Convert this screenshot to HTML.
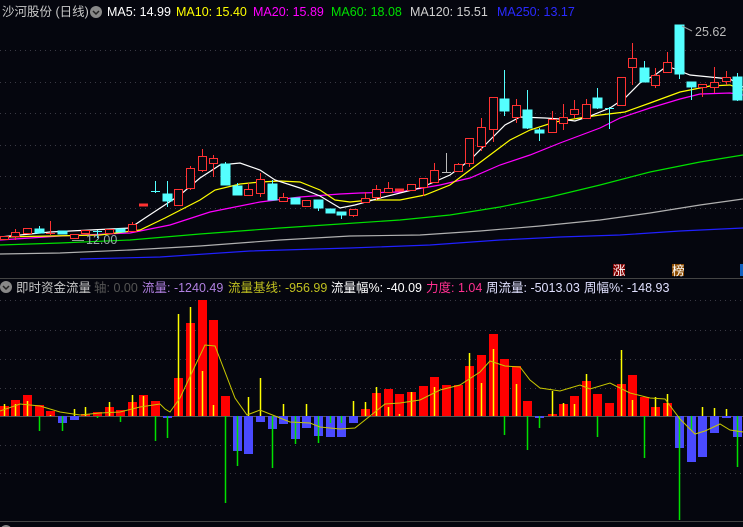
<!DOCTYPE html>
<html><head><meta charset="utf-8"><style>
html,body{margin:0;padding:0;background:#05060e;width:743px;height:527px;overflow:hidden}
svg{display:block}
text{font-family:"Liberation Sans","Noto Sans CJK SC",sans-serif;font-size:12.5px}
</style></head><body>
<svg width="743" height="527" viewBox="0 0 743 527" xmlns="http://www.w3.org/2000/svg">
<rect width="743" height="527" fill="#05060e"/>
<g stroke="#3a3a44" stroke-width="1" stroke-dasharray="1,4">
<line x1="0" y1="50.5" x2="743" y2="50.5"/><line x1="0" y1="82.5" x2="743" y2="82.5"/><line x1="0" y1="113.5" x2="743" y2="113.5"/><line x1="0" y1="145.5" x2="743" y2="145.5"/><line x1="0" y1="176.5" x2="743" y2="176.5"/><line x1="0" y1="208.5" x2="743" y2="208.5"/>
<line x1="0" y1="300.5" x2="743" y2="300.5"/><line x1="0" y1="330.5" x2="743" y2="330.5"/><line x1="0" y1="359.5" x2="743" y2="359.5"/><line x1="0" y1="388.5" x2="743" y2="388.5"/><line x1="0" y1="445.5" x2="743" y2="445.5"/><line x1="0" y1="473.5" x2="743" y2="473.5"/>
</g>
<line x1="0" y1="278.5" x2="743" y2="278.5" stroke="#444" />
<line x1="0" y1="521.5" x2="743" y2="521.5" stroke="#444" />
<g fill="none" stroke-width="1.2">
<polyline stroke="#2020ff" points="80,259 160,257 250,251 350,248 430,245 500,240 560,237 620,235 680,231 743,228"/>
<polyline stroke="#b0b0b0" points="0,254 60,253 130,250 200,246 280,240 350,236 420,235 480,231 540,226 600,220 650,213 700,205 743,199"/>
<polyline stroke="#00e000" points="0,245 60,243 130,240 200,234 280,228 340,224 400,220 450,215 500,207 550,197 600,185 650,172 700,162 743,155"/>
<polyline stroke="#ff00ff" points="0,240 60,236 130,233 170,225 210,212 260,202 300,197 340,194 360,193 400,192 440,185 470,178 500,165 530,155 560,143 600,128 620,118 650,108 680,99 700,94 730,93 743,95"/>
<polyline stroke="#ffff00" points="0,237 100,235 140,230 165,218 200,200 215,190 240,184 260,182 280,181 300,182 320,190 335,200 350,202 370,200 400,200 425,195 450,185 470,170 490,155 510,140 530,130 555,122 580,118 600,115 625,112 650,103 680,92 710,86 730,85 743,90"/>
<polyline stroke="#ffffff" points="0,237 50,232 130,228 145,218 180,195 200,178 220,165 240,163 260,170 275,180 300,188 320,196 340,208 355,205 380,198 420,188 450,175 470,160 490,140 505,125 520,117 545,118 560,119 575,121 590,116 610,108 625,98 640,83 655,75 667,66 680,71 690,75 710,77 730,79 743,87"/>
</g>
<g stroke="#ff3232" fill="#05060e" stroke-width="1">
<rect x="0.5" y="236.5" width="8" height="3"/>
<line x1="15.5" y1="229" x2="15.5" y2="240"/><rect x="11.5" y="232.5" width="8" height="4"/>
<rect x="23.5" y="228.5" width="8" height="5"/>
<line x1="50.5" y1="221" x2="50.5" y2="235"/><line x1="46" y1="233.5" x2="55" y2="233.5"/>
<rect x="70.5" y="234.5" width="8" height="4"/>
<rect x="81.5" y="230.5" width="8" height="3"/>
<rect x="105.5" y="229.5" width="8" height="4"/>
<line x1="132.5" y1="222" x2="132.5" y2="231"/><rect x="128.5" y="224.5" width="8" height="7"/>
<rect x="139.5" y="204" width="8" height="2" fill="#ff3232"/>
<rect x="174.5" y="189.5" width="8" height="16"/>
<line x1="190.5" y1="166" x2="190.5" y2="190"/><rect x="186.5" y="168.5" width="8" height="20"/>
<line x1="202.5" y1="149" x2="202.5" y2="172"/><rect x="198.5" y="156.5" width="8" height="14"/>
<line x1="213.5" y1="155" x2="213.5" y2="177"/><rect x="209.5" y="158.5" width="8" height="5"/>
<line x1="248.5" y1="183" x2="248.5" y2="196"/><rect x="244.5" y="189.5" width="8" height="6"/>
<line x1="260.5" y1="173" x2="260.5" y2="197"/><rect x="256.5" y="179.5" width="8" height="14"/>
<line x1="283.5" y1="193" x2="283.5" y2="202"/><rect x="279.5" y="197.5" width="8" height="4"/>
<rect x="302.5" y="200.5" width="8" height="6"/>
<line x1="353.5" y1="209" x2="353.5" y2="217"/><rect x="349.5" y="209.5" width="8" height="6"/>
<line x1="365.5" y1="192" x2="365.5" y2="202"/><rect x="361.5" y="198.5" width="8" height="4"/>
<line x1="376.5" y1="185" x2="376.5" y2="200"/><rect x="372.5" y="189.5" width="8" height="8"/>
<line x1="388.5" y1="182" x2="388.5" y2="192"/><rect x="384.5" y="188.5" width="8" height="4"/>
<rect x="395.5" y="189" width="8" height="2" fill="#ff3232"/>
<rect x="407.5" y="184.5" width="8" height="6"/>
<line x1="423.5" y1="178" x2="423.5" y2="196"/><rect x="419.5" y="178.5" width="8" height="9"/>
<line x1="434.5" y1="163" x2="434.5" y2="182"/><rect x="430.5" y="170.5" width="8" height="12"/>
<line x1="458.5" y1="163" x2="458.5" y2="171"/><rect x="454.5" y="164.5" width="8" height="7"/>
<line x1="469.5" y1="138" x2="469.5" y2="167"/><rect x="465.5" y="138.5" width="8" height="25"/>
<line x1="481.5" y1="118" x2="481.5" y2="151"/><rect x="477.5" y="127.5" width="8" height="19"/>
<line x1="493.5" y1="97" x2="493.5" y2="142"/><rect x="489.5" y="97.5" width="8" height="32"/>
<line x1="516.5" y1="99" x2="516.5" y2="123"/><rect x="512.5" y="105.5" width="8" height="12"/>
<line x1="552.5" y1="111" x2="552.5" y2="133"/><rect x="548.5" y="119.5" width="8" height="13"/>
<line x1="563.5" y1="104" x2="563.5" y2="130"/><rect x="559.5" y="117.5" width="8" height="6"/>
<line x1="574.5" y1="100" x2="574.5" y2="118"/><rect x="570.5" y="109.5" width="8" height="5"/>
<line x1="586.5" y1="99" x2="586.5" y2="118"/><rect x="582.5" y="104.5" width="8" height="14"/>
<rect x="617.5" y="77.5" width="8" height="28"/>
<line x1="632.5" y1="43" x2="632.5" y2="85"/><rect x="628.5" y="58.5" width="8" height="9"/>
<line x1="655.5" y1="68" x2="655.5" y2="88"/><rect x="651.5" y="75.5" width="8" height="10"/>
<line x1="667.5" y1="52" x2="667.5" y2="72"/><rect x="663.5" y="62.5" width="8" height="10"/>
<line x1="702.5" y1="84" x2="702.5" y2="97"/><rect x="698.5" y="84.5" width="8" height="3"/>
<line x1="714.5" y1="67" x2="714.5" y2="93"/><rect x="710.5" y="82.5" width="8" height="5"/>
<line x1="726.5" y1="71" x2="726.5" y2="85"/><rect x="722.5" y="77.5" width="8" height="4"/>
</g>
<g stroke="#54ffff" fill="#54ffff" stroke-width="1">
<line x1="39.5" y1="226" x2="39.5" y2="233"/><rect x="35" y="229" width="9" height="4"/>
<rect x="58" y="231" width="9" height="3"/>
<line x1="97.5" y1="230" x2="97.5" y2="238"/><line x1="93" y1="231.5" x2="102" y2="231.5"/>
<rect x="116" y="229" width="9" height="3"/>
<line x1="155.5" y1="181" x2="155.5" y2="193"/><line x1="151" y1="191.5" x2="160" y2="191.5"/>
<line x1="167.5" y1="181" x2="167.5" y2="207"/><rect x="163" y="194" width="9" height="7"/>
<line x1="225.5" y1="162" x2="225.5" y2="185"/><rect x="221" y="164" width="9" height="21"/>
<line x1="237.5" y1="183" x2="237.5" y2="195"/><rect x="233" y="186" width="9" height="9"/>
<line x1="272.5" y1="180" x2="272.5" y2="200"/><rect x="268" y="184" width="9" height="16"/>
<rect x="291" y="198" width="9" height="6"/>
<line x1="318.5" y1="200" x2="318.5" y2="211"/><rect x="314" y="200" width="9" height="8"/>
<rect x="326" y="209" width="9" height="4"/>
<line x1="341.5" y1="212" x2="341.5" y2="219"/><rect x="337" y="212" width="9" height="3"/>
<line x1="504.5" y1="70" x2="504.5" y2="116"/><rect x="500" y="99" width="9" height="12"/>
<line x1="527.5" y1="90" x2="527.5" y2="129"/><rect x="523" y="110" width="9" height="18"/>
<line x1="539.5" y1="128" x2="539.5" y2="141"/><rect x="535" y="130" width="9" height="3"/>
<line x1="597.5" y1="88" x2="597.5" y2="109"/><rect x="593" y="98" width="9" height="10"/>
<line x1="609.5" y1="107" x2="609.5" y2="129"/><line x1="605" y1="108.5" x2="614" y2="108.5"/>
<line x1="644.5" y1="61" x2="644.5" y2="82"/><rect x="640" y="68" width="9" height="14"/>
<line x1="679.5" y1="25" x2="679.5" y2="79"/><rect x="675" y="25" width="9" height="49"/>
<line x1="691.5" y1="82" x2="691.5" y2="100"/><rect x="687" y="82" width="9" height="5"/>
<line x1="737.5" y1="73" x2="737.5" y2="101"/><rect x="733" y="77" width="9" height="23"/>
</g>
<g stroke="#bbbbbb"><line x1="446.5" y1="153" x2="446.5" y2="173"/><line x1="442" y1="172.5" x2="451" y2="172.5"/></g>
<text x="86" y="244" fill="#9aa" font-size="12">12.00</text>
<line x1="72" y1="240.5" x2="84" y2="240.5" stroke="#999"/>
<text x="695" y="36" fill="#bbb" font-size="12">25.62</text>
<line x1="682" y1="26" x2="692" y2="31" stroke="#999"/>
<rect x="613" y="264" width="12" height="12" fill="#800000"/><text x="613" y="275" fill="#fff" font-size="11">涨</text>
<rect x="672" y="264" width="12" height="12" fill="#8a4a00"/><text x="672" y="275" fill="#fff" font-size="11">榜</text>
<rect x="740" y="264" width="3" height="12" fill="#1060c0"/>
<text x="2" y="16" fill="#c8c8c8" font-size="13.5">沙河股份 (日线)</text>
<circle cx="96" cy="12" r="6" fill="#888"/><path d="M93 11 L96 14 L99 11" stroke="#222" stroke-width="1.5" fill="none"/>
<text x="107" y="16" fill="#ffffff">MA5: 14.99</text>
<text x="176" y="16" fill="#ffff00">MA10: 15.40</text>
<text x="253" y="16" fill="#ff00ff">MA20: 15.89</text>
<text x="331" y="16" fill="#00e000">MA60: 18.08</text>
<text x="410" y="16" fill="#d0d0d0">MA120: 15.51</text>
<text x="497" y="16" fill="#2a2aff">MA250: 13.17</text>
<circle cx="6" cy="287" r="6" fill="#888"/><path d="M3 286 L6 289 L9 286" stroke="#222" stroke-width="1.5" fill="none"/>
<text x="16" y="292" fill="#c8c8c8">即时资金流量</text>
<text x="94" y="292" fill="#555">轴: 0.00</text>
<text x="142" y="292" fill="#b080e0">流量: -1240.49</text>
<text x="228" y="292" fill="#c0c020">流量基线: -956.99</text>
<text x="331" y="292" fill="#ffffff">流量幅%: -40.09</text>
<text x="426" y="292" fill="#ff3090">力度: 1.04</text>
<text x="486" y="292" fill="#e0e0ff">周流量: -5013.03</text>
<text x="584" y="292" fill="#e0e0ff">周幅%: -148.93</text>
<line x1="0" y1="416.5" x2="743" y2="416.5" stroke="#555"/>
<g fill="#ff0000">
<rect x="0" y="406" width="9" height="10"/><rect x="11" y="400" width="9" height="16"/><rect x="23" y="395" width="9" height="21"/><rect x="35" y="405" width="9" height="11"/><rect x="46" y="411" width="9" height="5"/>
<rect x="81" y="414" width="9" height="2"/><rect x="93" y="412" width="9" height="4"/><rect x="105" y="407" width="9" height="9"/><rect x="116" y="410" width="9" height="6"/><rect x="128" y="402" width="9" height="14"/><rect x="139" y="395" width="9" height="21"/><rect x="151" y="401" width="9" height="15"/>
<rect x="174" y="378" width="9" height="38"/><rect x="186" y="323" width="9" height="93"/><rect x="198" y="300" width="9" height="116"/><rect x="209" y="320" width="9" height="96"/><rect x="221" y="396" width="9" height="20"/>
<rect x="361" y="409" width="9" height="7"/><rect x="372" y="393" width="9" height="23"/><rect x="384" y="389" width="9" height="27"/><rect x="395" y="394" width="9" height="22"/><rect x="407" y="392" width="9" height="24"/><rect x="419" y="386" width="9" height="30"/><rect x="430" y="377" width="9" height="39"/><rect x="442" y="385" width="9" height="31"/><rect x="454" y="385" width="9" height="31"/><rect x="465" y="366" width="9" height="50"/><rect x="477" y="355" width="9" height="61"/><rect x="489" y="334" width="9" height="82"/><rect x="500" y="359" width="9" height="57"/><rect x="512" y="366" width="9" height="50"/><rect x="523" y="401" width="9" height="15"/>
<rect x="548" y="414" width="9" height="2"/><rect x="559" y="404" width="9" height="12"/><rect x="570" y="396" width="9" height="20"/><rect x="582" y="381" width="9" height="35"/><rect x="593" y="394" width="9" height="22"/><rect x="605" y="403" width="9" height="13"/><rect x="617" y="384" width="9" height="32"/><rect x="628" y="375" width="9" height="41"/><rect x="640" y="397" width="9" height="19"/><rect x="651" y="407" width="9" height="9"/><rect x="663" y="403" width="9" height="13"/>
</g>
<g fill="#4a4aff">
<rect x="58" y="416" width="9" height="7"/><rect x="70" y="416" width="9" height="4"/><rect x="163" y="416" width="9" height="2"/>
<rect x="233" y="416" width="9" height="35"/><rect x="244" y="416" width="9" height="38"/><rect x="256" y="416" width="9" height="6"/><rect x="268" y="416" width="9" height="13"/><rect x="279" y="416" width="9" height="8"/><rect x="291" y="416" width="9" height="23"/><rect x="302" y="416" width="9" height="12"/><rect x="314" y="416" width="9" height="20"/><rect x="326" y="416" width="9" height="21"/><rect x="337" y="416" width="9" height="21"/><rect x="349" y="416" width="9" height="7"/>
<rect x="535" y="416" width="9" height="2"/>
<rect x="675" y="416" width="9" height="32"/><rect x="687" y="416" width="9" height="46"/><rect x="698" y="416" width="9" height="41"/><rect x="710" y="416" width="9" height="17"/><rect x="722" y="416" width="9" height="2"/><rect x="733" y="416" width="9" height="21"/>
</g>
<g stroke="#ffff00" stroke-width="1.5">
<line x1="4.5" y1="404" x2="4.5" y2="416"/><line x1="15.5" y1="404" x2="15.5" y2="416"/><line x1="27.5" y1="401" x2="27.5" y2="416"/><line x1="50.5" y1="415" x2="50.5" y2="416"/><line x1="74.5" y1="409" x2="74.5" y2="416"/><line x1="85.5" y1="407" x2="85.5" y2="416"/><line x1="109.5" y1="402" x2="109.5" y2="416"/><line x1="132.5" y1="395" x2="132.5" y2="416"/><line x1="143.5" y1="396" x2="143.5" y2="416"/>
<line x1="178.5" y1="314" x2="178.5" y2="416"/><line x1="190.5" y1="307" x2="190.5" y2="416"/><line x1="202.5" y1="371" x2="202.5" y2="416"/><line x1="213.5" y1="405" x2="213.5" y2="416"/><line x1="248.5" y1="397" x2="248.5" y2="416"/><line x1="260.5" y1="378" x2="260.5" y2="416"/><line x1="283.5" y1="404" x2="283.5" y2="416"/><line x1="306.5" y1="404" x2="306.5" y2="416"/><line x1="353.5" y1="401" x2="353.5" y2="416"/><line x1="365.5" y1="402" x2="365.5" y2="416"/>
<line x1="376.5" y1="387" x2="376.5" y2="416"/><line x1="388.5" y1="407" x2="388.5" y2="416"/><line x1="399.5" y1="414" x2="399.5" y2="416"/><line x1="411.5" y1="392" x2="411.5" y2="416"/><line x1="434.5" y1="387" x2="434.5" y2="416"/><line x1="469.5" y1="353" x2="469.5" y2="416"/><line x1="481.5" y1="383" x2="481.5" y2="416"/><line x1="493.5" y1="349" x2="493.5" y2="416"/><line x1="516.5" y1="384" x2="516.5" y2="416"/><line x1="552.5" y1="391" x2="552.5" y2="416"/><line x1="563.5" y1="403" x2="563.5" y2="416"/><line x1="574.5" y1="404" x2="574.5" y2="416"/><line x1="586.5" y1="374" x2="586.5" y2="416"/><line x1="621.5" y1="350" x2="621.5" y2="416"/><line x1="632.5" y1="400" x2="632.5" y2="416"/><line x1="655.5" y1="397" x2="655.5" y2="416"/><line x1="667.5" y1="394" x2="667.5" y2="416"/><line x1="702.5" y1="407" x2="702.5" y2="416"/><line x1="714.5" y1="408" x2="714.5" y2="416"/><line x1="726.5" y1="409" x2="726.5" y2="416"/>
</g>
<g stroke="#00e000" stroke-width="1.5">
<line x1="39.5" y1="416" x2="39.5" y2="431"/><line x1="62.5" y1="416" x2="62.5" y2="431"/><line x1="97.5" y1="416" x2="97.5" y2="418"/><line x1="120.5" y1="416" x2="120.5" y2="422"/><line x1="155.5" y1="416" x2="155.5" y2="441"/><line x1="167.5" y1="416" x2="167.5" y2="438"/>
<line x1="225.5" y1="416" x2="225.5" y2="503"/><line x1="237.5" y1="416" x2="237.5" y2="466"/><line x1="272.5" y1="416" x2="272.5" y2="468"/><line x1="295.5" y1="416" x2="295.5" y2="444"/><line x1="318.5" y1="416" x2="318.5" y2="443"/><line x1="330.5" y1="416" x2="330.5" y2="423"/><line x1="341.5" y1="416" x2="341.5" y2="423"/>
<line x1="504.5" y1="416" x2="504.5" y2="435"/><line x1="527.5" y1="416" x2="527.5" y2="450"/><line x1="539.5" y1="416" x2="539.5" y2="428"/><line x1="597.5" y1="416" x2="597.5" y2="437"/><line x1="644.5" y1="416" x2="644.5" y2="458"/><line x1="679.5" y1="416" x2="679.5" y2="520"/><line x1="691.5" y1="416" x2="691.5" y2="430"/><line x1="737.5" y1="416" x2="737.5" y2="467"/>
</g>
<polyline fill="none" stroke="#c8c800" stroke-width="1" points="0,411 20,404 40,406 60,412 80,415 100,413 120,412 140,407 160,404 165,409 170,412 180,398 195,366 205,345 215,346 235,398 247,415 260,410 275,416 290,422 310,423 320,427 340,429 355,428 370,416 385,404 400,403 420,400 440,390 460,385 480,372 490,361 505,366 520,367 530,380 540,388 560,391 580,385 590,389 610,383 630,393 650,398 665,399 680,419 695,434 705,431 720,424 730,430 743,432"/>
<circle cx="6" cy="531" r="6" fill="#888"/>
<text x="16" y="537" fill="#ddd">MACD(12,26,9) DIF: -0.9583</text>
<text x="200" y="537" fill="#ffff00">DEA: -0.5753</text>
</svg>
</body></html>
